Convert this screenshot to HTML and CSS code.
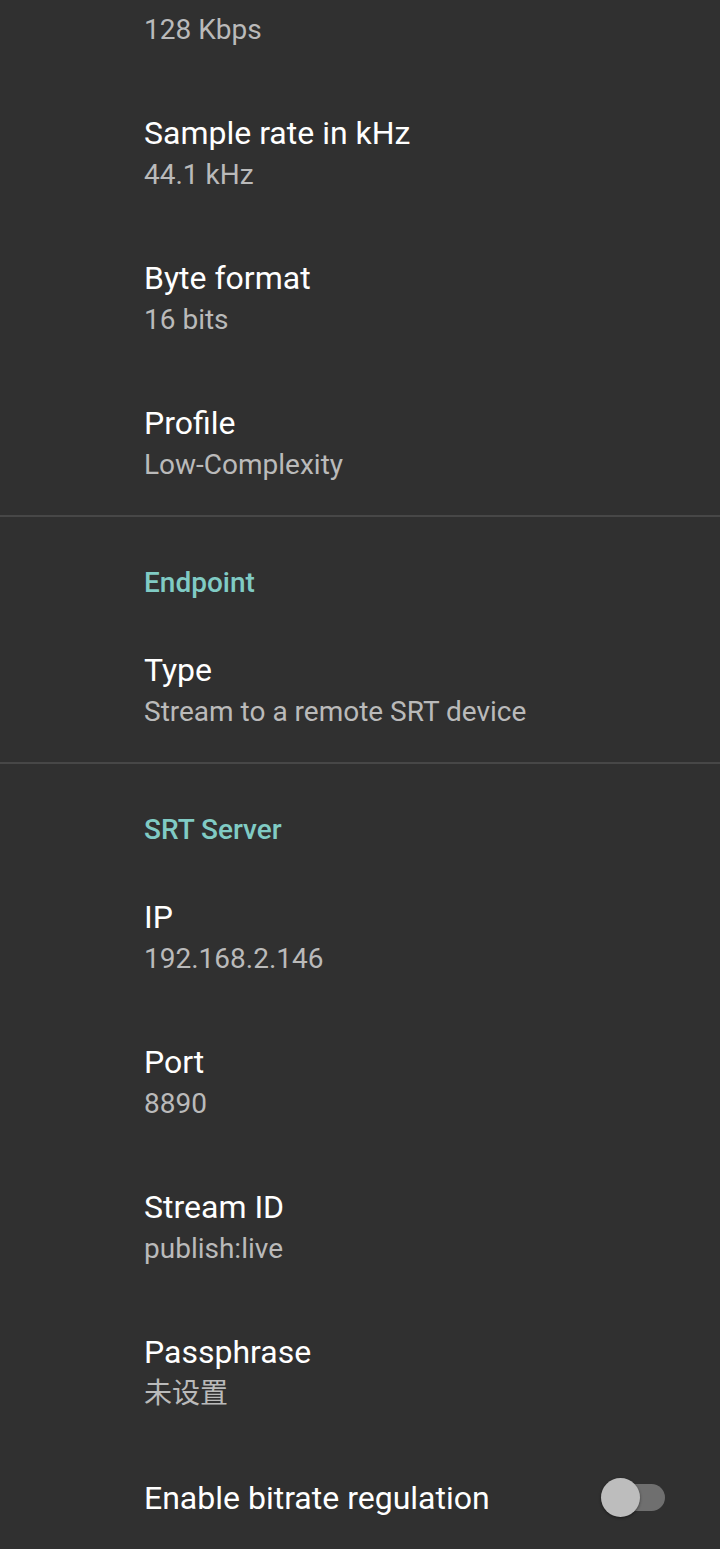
FILE: index.html
```html
<!DOCTYPE html>
<html lang="en">
<head>
<meta charset="utf-8">
<title>Settings</title>
<link rel="stylesheet" href="styles.css">
</head>
<body>
<div class="list">
  <div class="pref"><div class="title">Bitrate</div><div class="summary">128 Kbps</div></div>
  <div class="pref"><div class="title">Sample rate in kHz</div><div class="summary">44.1 kHz</div></div>
  <div class="pref"><div class="title">Byte format</div><div class="summary">16 bits</div></div>
  <div class="pref"><div class="title">Profile</div><div class="summary">Low-Complexity</div></div>
  <div class="divider"></div>
  <div class="category">Endpoint</div>
  <div class="pref"><div class="title">Type</div><div class="summary">Stream to a remote SRT device</div></div>
  <div class="divider"></div>
  <div class="category">SRT Server</div>
  <div class="pref"><div class="title">IP</div><div class="summary">192.168.2.146</div></div>
  <div class="pref"><div class="title">Port</div><div class="summary">8890</div></div>
  <div class="pref"><div class="title">Stream ID</div><div class="summary">publish:live</div></div>
  <div class="pref"><div class="title">Passphrase</div><div class="summary cjk">未设置</div></div>
  <div class="pref pref-switch">
    <div class="title">Enable bitrate regulation</div>
    <span class="switch"><span class="track"></span><span class="thumb"></span></span>
  </div>
</div>
</body>
</html>
```

FILE: styles.css
```css
html, body {
  margin: 0;
  padding: 0;
  background: #303030;
}
body {
  font-family: Roboto, "Noto Sans", "Liberation Sans", sans-serif;
  width: 720px;
  height: 1549px;
  overflow: hidden;
}
.list {
  margin-top: -65px;
  display: flex;
  flex-direction: column;
}
.pref {
  box-sizing: border-box;
  height: 145px;
  padding: 34px 40px 0 144px;
}
.title {
  color: #ffffff;
  font-size: 32px;
  line-height: 38px;
}
.summary {
  color: #bababa;
  font-size: 28px;
  line-height: 33px;
  margin-top: 6px;
}
.cjk {
  font-family: Roboto, "Noto Sans CJK SC", sans-serif;
}
.divider {
  height: 2px;
  background: #474747;
}
.category {
  box-sizing: border-box;
  height: 100px;
  padding: 49px 0 0 144px;
  color: #80cbc4;
  font-size: 28px;
  font-weight: 500;
  line-height: 33px;
}
.pref-switch {
  height: auto;
  display: flex;
  align-items: center;
  justify-content: space-between;
  padding-right: 55px;
  padding-bottom: 34px;
}
.switch {
  position: relative;
  width: 64px;
  height: 39px;
  display: block;
}
.track {
  position: absolute;
  left: 2px;
  right: 0;
  top: 6px;
  height: 27px;
  border-radius: 14px;
  background: #6f6f6f;
}
.thumb {
  position: absolute;
  left: 0;
  top: 0;
  width: 39px;
  height: 39px;
  border-radius: 50%;
  background: #bdbdbd;
  box-shadow: 0 1px 3px rgba(0, 0, 0, 0.45);
}
```
